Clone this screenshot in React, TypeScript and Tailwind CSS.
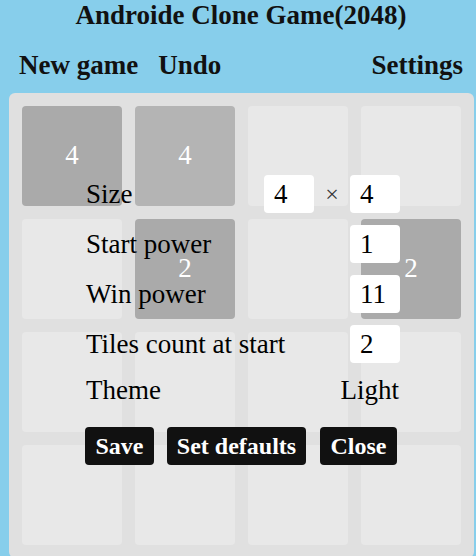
const BOARD: (number | null)[][] = [
  [4, 4, null, null],
  [null, 2, null, 2],
  [null, null, null, null],
  [null, null, null, null],
];

function Tile({ value, light }: { value: number | null; light?: boolean }) {
  if (value === null) {
    return <div className="h-[100px] w-[100px] rounded-[4px] bg-[#e8e8e8]" />;
  }
  return (
    <div
      className={`flex h-[100px] w-[100px] items-center justify-center rounded-[4px] pb-[2px] text-[27px] text-white ${
        light ? 'bg-[#b4b4b4]' : 'bg-[#aaaaaa]'
      }`}
    >
      {value}
    </div>
  );
}

function NumberBox({ value }: { value: number }) {
  return (
    <div className="flex h-[38px] w-[50px] items-center rounded-[4px] bg-white pl-[10px] text-[27px]">{value}</div>
  );
}

const btn =
  'flex h-[38px] items-center justify-center whitespace-nowrap rounded-[4px] bg-[#111111] text-[24px] font-bold leading-none text-white';

function SettingsPanel() {
  const rows = [
    { label: 'Start power', value: 1 },
    { label: 'Win power', value: 11 },
    { label: 'Tiles count at start', value: 2 },
  ];
  return (
    <div className="absolute left-[77px] top-[82px] w-[314px] text-[27px] text-black">
      <div className="flex flex-col gap-[12px]">
        <div className="flex h-[38px] items-center justify-between">
          <span>Size</span>
          <div className="flex items-center">
            <NumberBox value={4} />
            <span className="w-[36px] text-center text-[24px] text-[#333333]">×</span>
            <NumberBox value={4} />
          </div>
        </div>
        {rows.map((row) => (
          <div key={row.label} className="flex h-[38px] items-center justify-between">
            <span>{row.label}</span>
            <NumberBox value={row.value} />
          </div>
        ))}
        <div className="flex h-[30px] items-center justify-between pr-[1px]">
          <span>Theme</span>
          <span>Light</span>
        </div>
      </div>
      <div className="-ml-[1px] mt-[22px] flex">
        <button className={`${btn} w-[69px]`}>Save</button>
        <button className={`${btn} ml-[13px] w-[139px]`}>Set defaults</button>
        <button className={`${btn} ml-[14px] w-[77px]`}>Close</button>
      </div>
    </div>
  );
}

export default function App() {
  return (
    <div className="min-h-[556px] w-full overflow-hidden bg-[#87ceeb] font-['Liberation_Serif',serif] text-[#111111]">
      <h1 className="pl-[6px] text-center text-[27px] font-bold leading-[30px]">Androide Clone Game(2048)</h1>
      <div className="mt-[20px] flex items-center pl-[19px] pr-[13px] text-[27px] font-bold leading-[30px]">
        <span>New game</span>
        <span className="ml-[20px]">Undo</span>
        <span className="ml-auto">Settings</span>
      </div>
      <div className="relative ml-[9px] mt-[13px] w-[465px] rounded-[6px] bg-[#e0e0e0] p-[13px]">
        <div className="grid grid-cols-4 gap-[13px]">
          {BOARD.map((row, r) =>
            row.map((v, c) => <Tile key={`${r}-${c}`} value={v} light={r === 0 && c === 1} />),
          )}
        </div>
        <SettingsPanel />
      </div>
    </div>
  );
}
